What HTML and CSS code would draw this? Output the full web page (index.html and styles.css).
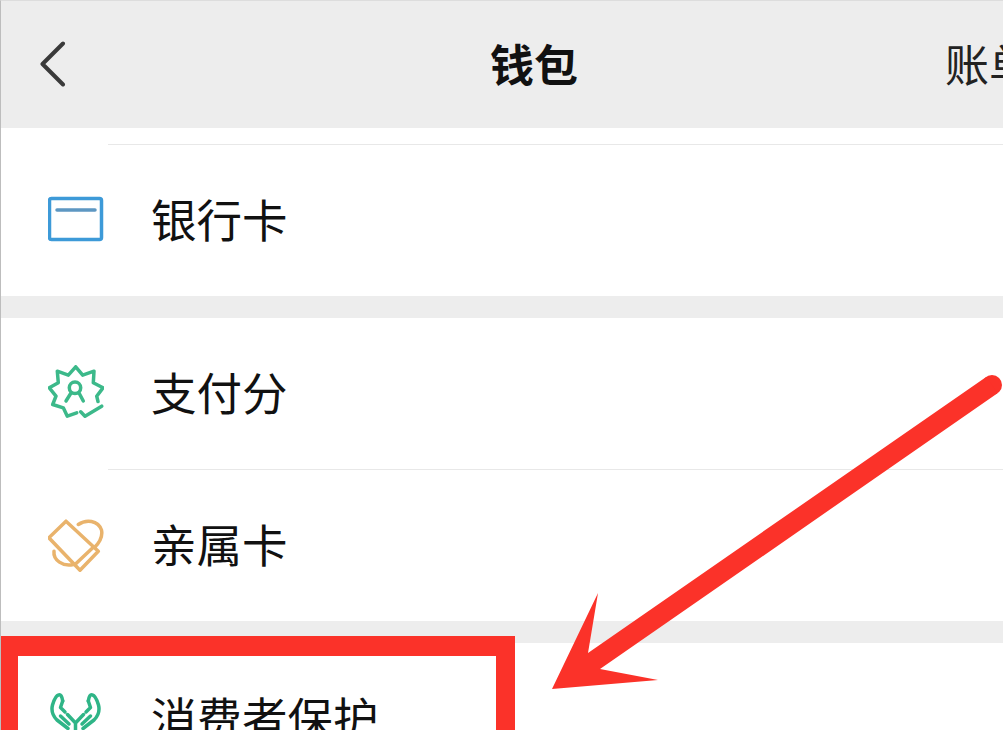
FILE: index.html
```html
<!DOCTYPE html>
<html lang="zh-CN">
<head>
    <meta charset="UTF-8">
    <meta name="viewport" content="width=device-width, initial-scale=1.0">
    <title>钱包</title>
    <link rel="stylesheet" href="styles.css">
</head>
<body>
    <div class="screen">
        <header class="topbar">
            <div class="topbar-left">
                <svg class="back-icon" viewBox="0 0 26 46">
                    <path d="M23 2.5 L2.5 23 L23 43.5"/>
                </svg>
            </div>
            <h1 class="topbar-title">钱包</h1>
            <div class="topbar-action">账单</div>
        </header>

        <section class="group">
            <div class="row-cut"></div>
            <div class="row row-divided">
                <svg class="row-icon icon-blue" viewBox="0 0 56 56">
                    <rect x="1.5" y="6.5" width="52" height="41" rx="2"/>
                    <path class="card-line" d="M9 18 H47"/>
                </svg>
                <div class="row-body">银行卡</div>
            </div>
        </section>

        <section class="group">
            <div class="row">
                <svg class="row-icon icon-green" viewBox="0 0 56 56">
                    <path d="M28.7 47.8 L19.3 51.2 L15.3 42.8 L4.7 39.5 L8 31.2 L1.3 22.8 L10.3 17.8 L9.3 6.2 L20.3 10.2 L27.7 1.8 L34.7 10.2 L46 6.2 L45.3 17.8 L55 22.8 L48.7 31.2 L50 36.5"/>
                    <circle cx="27" cy="22.8" r="5.7"/>
                    <path d="M22.7 28.5 L18 36 M31.3 28.5 L35.3 36"/>
                    <path d="M32.7 46.8 L37 51.2 L53.7 41.2"/>
                </svg>
                <div class="row-body">支付分</div>
            </div>
            <div class="row row-divided">
                <svg class="row-icon icon-orange" viewBox="0 0 56 56">
                    <path d="M18 4.2 L50.3 34.2 L32 53.2 L0.9 20.8 Z"/>
                    <path d="M45.3 30.2 L27 47.5"/>
                    <path d="M30.3 7.5 C38 2 50 3 53.5 13 C55 20 51 26 46.5 30.5"/>
                    <path d="M6 34.2 C5 43 15 50 25.3 47.5"/>
                </svg>
                <div class="row-body">亲属卡</div>
            </div>
        </section>

        <section class="group">
            <div class="row">
                <svg class="row-icon icon-teal" viewBox="0 0 56 56">
                    <path d="M14.7 11 C14 6 12.5 4 10.5 5 C8 5.5 6 10 4.5 15 C3 21 5 26 9 30 L20 38.5"/>
                    <path d="M14.7 11 L12.5 17.5 L17 22"/>
                    <path d="M12.5 26 L21 34"/>
                    <path d="M40.3 11 C41 6 42.5 4 44.5 5 C47 5.5 49 10 50.5 15 C52 21 50 26 46 30 L35 38.5"/>
                    <path d="M40.3 11 L42.5 17.5 L38 22"/>
                    <path d="M42.5 26 L34 34"/>
                    <path d="M19.5 24.5 L27.5 33 L35.5 24.5 M27.5 33 V50"/>
                </svg>
                <div class="row-body">消费者保护</div>
            </div>
        </section>

        <div class="mark-box"></div>
        <svg class="mark-arrow" viewBox="0 0 1003 730">
            <circle cx="992" cy="385" r="10"/>
            <polygon points="552,689 598,593 588,653 986.5,376.7 997.5,393.3 600,669 658,680"/>
        </svg>
    </div>
</body>
</html>
```

FILE: styles.css
```css
html, body {
    margin: 0;
    height: 730px;
    overflow: hidden;
}

body {
    background-color: #EDEDED;
    font-family: "Noto Sans CJK SC", "Noto Sans", sans-serif;
    color: #111111;
}

.screen {
    position: relative;
    width: 1068px;
    height: 730px;
    border-left: 1px solid #BDBDBD;
    border-top: 1px solid #DDDDDD;
    box-sizing: border-box;
    overflow: hidden;
}

.topbar {
    display: grid;
    grid-template-columns: 1fr auto 1fr;
    align-items: center;
    height: 127px;
    padding: 0 35px 4px 39px;
    box-sizing: border-box;
    background-color: #EDEDED;
}

.back-icon {
    display: block;
    width: 26px;
    height: 46px;
    margin-top: 3px;
    fill: none;
    stroke: #3A3A3A;
    stroke-width: 4;
    stroke-linecap: round;
    stroke-linejoin: round;
}

.topbar-title {
    margin: 0 5px 0 0;
    font-size: 44px;
    font-weight: 700;
    line-height: 1;
}

.topbar-action {
    font-size: 44px;
    line-height: 1;
    text-align: right;
    color: #222222;
}

.group {
    background-color: #FFFFFF;
    margin-bottom: 22px;
}

.row-cut {
    height: 16px;
}

.row {
    display: flex;
    align-items: stretch;
    height: 151px;
    padding-left: 47px;
}

.row-divided {
    height: 152px;
}

.row-divided .row-body {
    border-top: 1px solid #E8E8E8;
}

.row-icon {
    flex: none;
    width: 56px;
    height: 56px;
    margin-top: 47px;
    margin-right: 4px;
    fill: none;
    stroke-width: 3.5;
    stroke-linecap: round;
    stroke-linejoin: round;
}

.row-divided .row-icon {
    margin-top: 48px;
}

.icon-blue {
    stroke: #3D9AD8;
}

.icon-blue .card-line {
    stroke: #5D97C2;
}

.icon-green {
    stroke: #3CB98A;
}

.icon-orange {
    stroke: #E9B36C;
}

.icon-teal {
    stroke: #2FB587;
}

.row-body {
    flex: 1;
    display: flex;
    align-items: center;
    padding: 0 0 4px 43px;
    font-size: 45.5px;
    line-height: 1;
}

/* annotations drawn over the screenshot */
.mark-box {
    position: absolute;
    left: -1px;
    top: 635px;
    width: 515px;
    height: 140px;
    border-style: solid;
    border-color: #FB3229;
    border-width: 20px 19px 20px 18px;
    box-sizing: border-box;
}

.mark-arrow {
    position: absolute;
    left: -1px;
    top: -1px;
    width: 1003px;
    height: 730px;
    fill: #FB3229;
}
```
